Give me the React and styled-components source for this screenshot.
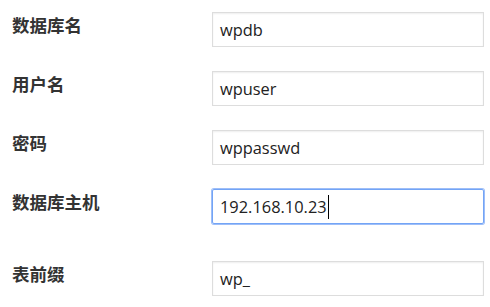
import React from "react";
import styled, { createGlobalStyle } from "styled-components";

const Global = createGlobalStyle`
  html, body { margin: 0; padding: 0; background: #fff; }
  body { font-family: "Open Sans", "Noto Sans CJK SC", sans-serif; }
`;

const Form = styled.div`
  padding: 12px 6px 0 12px;
  display: flex;
  flex-direction: column;
`;

const Row = styled.div`
  display: grid;
  grid-template-columns: 200px 272px;
  align-items: start;
  margin-bottom: ${(p) => (p.$tall ? "37px" : "24px")};
`;

const Label = styled.div`
  font-family: "Noto Sans CJK SC", "Noto Sans", sans-serif;
  font-weight: 700;
  font-size: 17.5px;
  line-height: 24px;
  padding-top: 1px;
  color: #333;
`;

const Field = styled.div`
  box-sizing: border-box;
  height: 35px;
  display: flex;
  align-items: center;
  padding: 0 7px;
  border: 1px solid ${(p) => (p.$focused ? "#73a4f6" : "#dddddd")};
  border-radius: ${(p) => (p.$focused ? "2px" : "0")};
  box-shadow: ${(p) =>
    p.$focused
      ? "0 0 0 1px rgba(125,168,246,0.75)"
      : "inset 0 1px 2px rgba(0,0,0,0.07)"};
  font-family: "Open Sans", "Noto Sans", sans-serif;
  font-size: 16.4px;
  color: #222;
  white-space: nowrap;
`;

const Caret = styled.span`
  display: inline-block;
  width: 1px;
  height: 24px;
  margin-left: 1px;
  background: #000;
`;

const rows = [
  { label: "数据库名", value: "wpdb" },
  { label: "用户名", value: "wpuser" },
  { label: "密码", value: "wppasswd" },
  { label: "数据库主机", value: "192.168.10.23", focused: true, tall: true },
  { label: "表前缀", value: "wp_" },
];

export default function App() {
  return (
    <>
      <Global />
      <Form>
        {rows.map((r) => (
          <Row key={r.label} $tall={r.tall}>
            <Label>{r.label}</Label>
            <Field role="textbox" $focused={r.focused}>
              {r.value}
              {r.focused && <Caret />}
            </Field>
          </Row>
        ))}
      </Form>
    </>
  );
}
